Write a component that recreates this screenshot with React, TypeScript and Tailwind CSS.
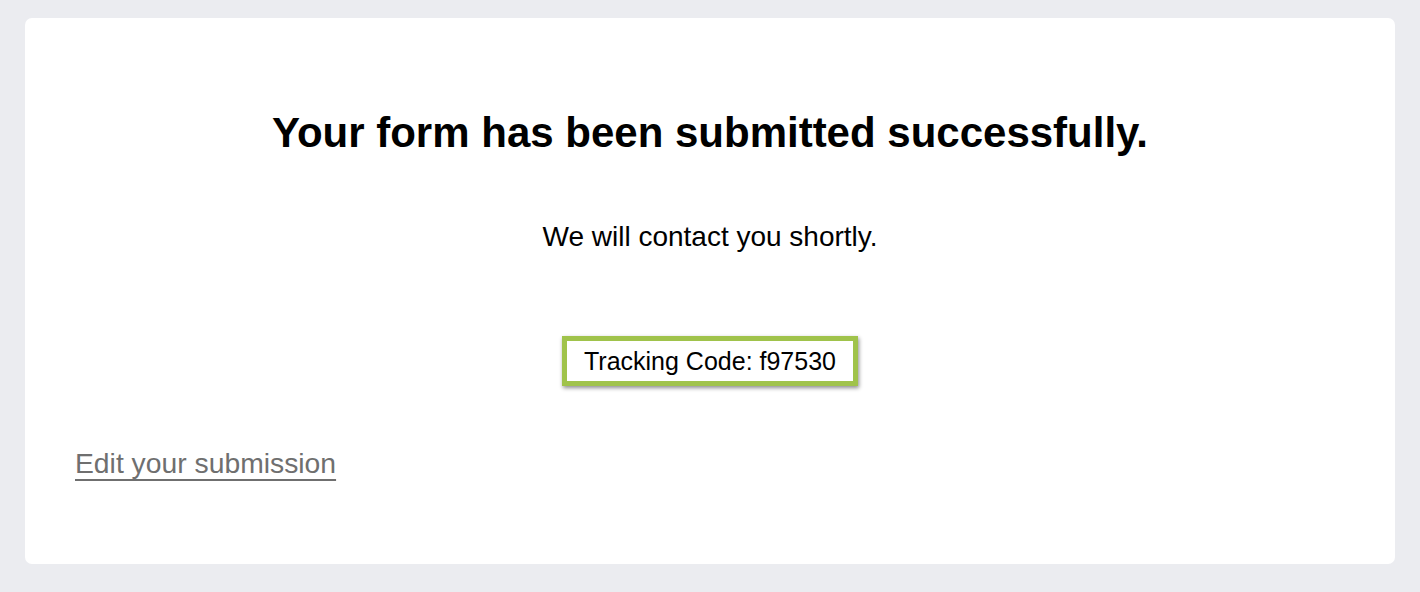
export default function App() {
  return (
    <div
      className="min-h-[592px] w-full bg-[#ebecf0] px-[25px] pt-[18px] pb-[28px]"
      style={{ fontFamily: '"Liberation Sans", Arial, sans-serif' }}
    >
      <div className="h-[546px] rounded-[7px] bg-white px-[50px] pt-[87px]">
        <h1 className="text-center text-[42px] font-bold leading-[56px] text-black">
          Your form has been submitted successfully.
        </h1>
        <p className="mt-[61px] text-center text-[28px] leading-[30px] text-black">
          We will contact you shortly.
        </p>
        <div className="mt-[84px] flex justify-center">
          <div className="border-[5px] border-[#a0c34b] bg-white px-[17px] py-[6px] text-[25px] leading-[28px] text-black shadow-[1px_2px_4px_rgba(0,0,0,0.45)]">
            Tracking Code: f97530
          </div>
        </div>
        <div className="mt-[61px]">
          <a
            href="#"
            className="text-[28.3px] leading-[32px] text-[#6f6f6f] underline decoration-2 underline-offset-[6px]"
          >
            Edit your submission
          </a>
        </div>
      </div>
    </div>
  );
}
